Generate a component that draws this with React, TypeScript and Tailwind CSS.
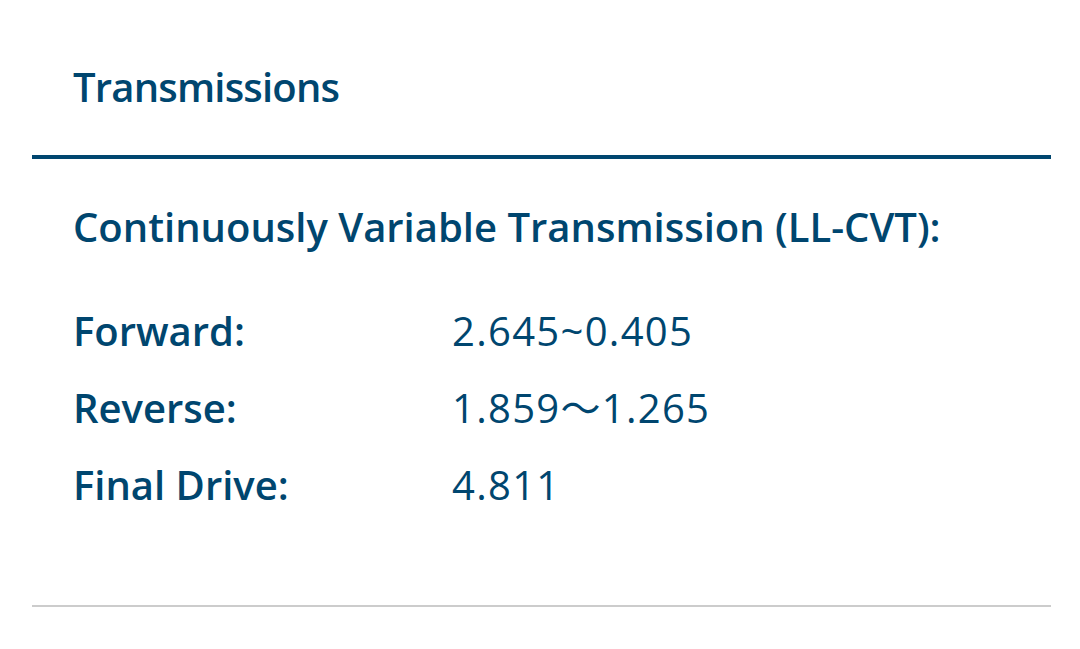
const rows = [
  { label: 'Forward:', value: '2.645~0.405' },
  { label: 'Reverse:', value: '1.859〜1.265' },
  { label: 'Final Drive:', value: '4.811' },
]

export default function App() {
  return (
    <div
      className="w-[1080px] h-[649px] bg-white pl-8 pr-[29px] text-[#00466f]"
      style={{ fontFamily: '"Open Sans", "Noto Sans CJK JP", sans-serif' }}
    >
      <div className="pl-[41px] pt-[63px] pb-[44px]">
        <h2 className="text-[40px] leading-[48px] font-semibold tracking-[-0.8px]">Transmissions</h2>
      </div>
      <div className="h-1 bg-[#00466f]" />

      <div className="pl-[41px] pt-[44px] pb-[82px]">
        <h3 className="text-[40px] leading-[48px] font-semibold">
          Continuously Variable Transmission (LL-CVT):
        </h3>
        <dl className="mt-[41px] grid grid-cols-[379px_1fr]">
          {rows.map((r) => (
            <div key={r.label} className="contents">
              <dt className="text-[40px] leading-[77px] font-semibold">{r.label}</dt>
              <dd className="text-[40px] leading-[77px] tracking-[1.3px]">{r.value}</dd>
            </div>
          ))}
        </dl>
      </div>
      <div className="h-0.5 bg-[#cccccc]" />
    </div>
  )
}
